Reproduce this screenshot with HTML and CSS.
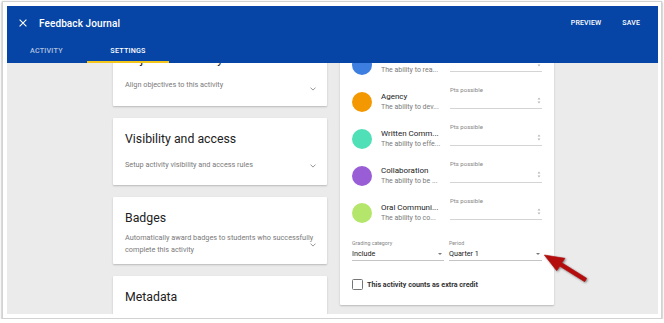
FILE: index.html
```html
<!DOCTYPE html>
<html lang="en">
<head>
<meta charset="utf-8">
<title>Feedback Journal – Settings</title>
<link rel="stylesheet" href="styles.css">
</head>
<body>
<div class="frame">
  <div class="app">
    <header class="appbar">
      <div class="bar-top">
        <svg class="close" viewBox="0 0 8 8"><path d="M0.6 0.6L7.4 7.4M7.4 0.6L0.6 7.4"/></svg>
        <div class="title">Feedback Journal</div>
        <div class="actions"><span>PREVIEW</span><span>SAVE</span></div>
      </div>
      <nav class="tabs">
        <div class="tab first">ACTIVITY</div>
        <div class="tab active">SETTINGS</div>
      </nav>
    </header>
    <main class="content">
      <div class="scroll">
        <section class="col left">
          <div class="card setting setting-top">
            <h2>Objective Mastery</h2>
            <p>Align objectives to this activity</p>
            <svg class="chev" viewBox="0 0 6 4"><path d="M0.5 0.6L3 3.1L5.5 0.6"/></svg>
          </div>
          <div class="card setting">
            <h2>Visibility and access</h2>
            <p>Setup activity visibility and access rules</p>
            <svg class="chev" viewBox="0 0 6 4"><path d="M0.5 0.6L3 3.1L5.5 0.6"/></svg>
          </div>
          <div class="card setting">
            <h2>Badges</h2>
            <p>Automatically award badges to students who successfully complete this activity</p>
            <svg class="chev" viewBox="0 0 6 4"><path d="M0.5 0.6L3 3.1L5.5 0.6"/></svg>
          </div>
          <div class="card setting">
            <h2>Metadata</h2>
          </div>
        </section>
        <section class="col right">
          <div class="card outcomes">
            <div class="row">
              <span class="dot blue"></span>
              <div class="info"><div class="name">Knowledge &amp; Thi...</div><div class="desc">The ability to rea...</div></div>
              <div class="field"><label>Pts possible</label><div class="input"><svg class="spin" viewBox="0 0 4 7"><path d="M2 0.5L3.4 2.4H0.6Z M2 6.5L3.4 4.6H0.6Z"/></svg></div></div>
            </div>
            <div class="row">
              <span class="dot orange"></span>
              <div class="info"><div class="name">Agency</div><div class="desc">The ability to dev...</div></div>
              <div class="field"><label>Pts possible</label><div class="input"><svg class="spin" viewBox="0 0 4 7"><path d="M2 0.5L3.4 2.4H0.6Z M2 6.5L3.4 4.6H0.6Z"/></svg></div></div>
            </div>
            <div class="row">
              <span class="dot teal"></span>
              <div class="info"><div class="name">Written Comm...</div><div class="desc">The ability to effe...</div></div>
              <div class="field"><label>Pts possible</label><div class="input"><svg class="spin" viewBox="0 0 4 7"><path d="M2 0.5L3.4 2.4H0.6Z M2 6.5L3.4 4.6H0.6Z"/></svg></div></div>
            </div>
            <div class="row">
              <span class="dot purple"></span>
              <div class="info"><div class="name">Collaboration</div><div class="desc">The ability to be ...</div></div>
              <div class="field"><label>Pts possible</label><div class="input"><svg class="spin" viewBox="0 0 4 7"><path d="M2 0.5L3.4 2.4H0.6Z M2 6.5L3.4 4.6H0.6Z"/></svg></div></div>
            </div>
            <div class="row">
              <span class="dot green"></span>
              <div class="info"><div class="name">Oral Communi...</div><div class="desc">The ability to co...</div></div>
              <div class="field"><label>Pts possible</label><div class="input"><svg class="spin" viewBox="0 0 4 7"><path d="M2 0.5L3.4 2.4H0.6Z M2 6.5L3.4 4.6H0.6Z"/></svg></div></div>
            </div>
            <div class="selects">
              <div class="select">
                <label>Grading category</label>
                <div class="value"><span>Include</span><span class="caret"></span></div>
              </div>
              <div class="select">
                <label>Period</label>
                <div class="value"><span>Quarter 1</span><span class="caret"></span></div>
              </div>
            </div>
            <div class="check">
              <span class="box"></span>
              <span class="check-label">This activity counts as extra credit</span>
            </div>
          </div>
        </section>
      </div>
    </main>
    <svg class="annot-arrow" viewBox="0 0 52 35" width="52" height="35">
      <polygon points="4.3,5 25,8.3 21.9,12.8 46.7,28.3 44.7,31.7 19.8,16.2 16.7,20.7"/>
    </svg>
  </div>
</div>
</body>
</html>
```

FILE: styles.css
```css
* { box-sizing: border-box; }

html, body {
  margin: 0;
  padding: 0;
  background: #ffffff;
}

body {
  font-family: Roboto, "Noto Sans", "Liberation Sans", sans-serif;
}

.frame {
  margin: 1px 0 0 2px;
  width: 660px;
  height: 318px;
  border: 1px solid #d2d2d2;
  padding: 4px 3px 4px 4px;
  background: #ffffff;
  box-shadow: 0 1px 2px rgba(0, 0, 0, 0.45);
}

.app {
  position: relative;
  width: 651px;
  height: 308px;
  display: flex;
  flex-direction: column;
  background: #ebebeb;
  overflow: hidden;
}

/* ---------- App bar ---------- */
.appbar {
  flex: none;
  height: 57px;
  background: #0645a5;
  color: #ffffff;
  position: relative;
  z-index: 2;
}

.bar-top {
  height: 34px;
  display: flex;
  align-items: center;
  padding: 0 18px 0 12px;
}

.close {
  width: 8px;
  height: 8px;
  margin-right: 12px;
  stroke: #ffffff;
  stroke-width: 1.1;
  fill: none;
}

.title {
  flex: 1;
  font-size: 10px;
  font-weight: 500;
  letter-spacing: 0.1px;
}

.actions {
  display: flex;
  gap: 21px;
  font-size: 7px;
  font-weight: 500;
  letter-spacing: 0.15px;
}

.tabs {
  display: flex;
  height: 23px;
}

.tab {
  height: 23px;
  line-height: 21px;
  font-size: 7.2px;
  font-weight: 500;
  letter-spacing: 0.2px;
  color: rgba(255, 255, 255, 0.68);
}

.tab.first {
  width: 80px;
  padding-left: 23px;
}

.tab.active {
  width: 82px;
  text-align: center;
  color: #ffffff;
  border-bottom: 2px solid #f4c51a;
}

/* ---------- Content ---------- */
.content {
  flex: 1;
  overflow: hidden;
}

.scroll {
  display: flex;
  align-items: flex-start;
  gap: 13px;
  padding-left: 106px;
  margin-top: -24px;
}

.col {
  width: 214px;
  flex: none;
}

.left {
  display: flex;
  flex-direction: column;
  gap: 12px;
}

.card {
  background: #ffffff;
  border-radius: 1px;
  box-shadow: 0 1px 2px rgba(0, 0, 0, 0.22);
}

.setting {
  position: relative;
  height: 67px;
  padding: 13px 12px 0;
}

.setting h2 {
  margin: 0;
  font-size: 12.3px;
  line-height: 16px;
  font-weight: 400;
  color: #212121;
}

.setting-top {
  padding-top: 12px;
}

.setting-top p {
  margin-top: 9px;
}

.setting-top .chev {
  top: 48px;
}

.setting p {
  margin: 6px 0 0;
  width: 200px;
  height: 24px;
  display: flex;
  align-items: center;
  font-size: 7.3px;
  line-height: 12px;
  color: #7a7a7a;
}

.chev {
  position: absolute;
  right: 11px;
  top: 46px;
  width: 6px;
  height: 4px;
  fill: none;
  stroke: #8a8a8a;
  stroke-width: 0.9;
}

/* ---------- Outcomes card ---------- */
.outcomes {
  padding: 7.5px 12px 15.5px;
}

.row {
  display: grid;
  grid-template-columns: 20px 60px 92px;
  column-gap: 9px;
  height: 37px;
}

.dot {
  align-self: center;
  width: 20px;
  height: 20px;
  border-radius: 50%;
}

.dot.blue { background: #3d7fe1; }
.dot.orange { background: #f39800; }
.dot.teal { background: #4fe0b7; }
.dot.purple { background: #995dd5; }
.dot.green { background: #b4e66c; }

.info {
  align-self: center;
  white-space: nowrap;
  overflow: hidden;
}

.name {
  font-size: 8px;
  line-height: 10px;
  color: #212121;
}

.desc {
  font-size: 7px;
  line-height: 10px;
  color: #7a7a7a;
}

.field {
  padding-top: 1px;
}

.field label {
  display: block;
  font-size: 6px;
  line-height: 9px;
  color: #858585;
}

.input {
  position: relative;
  height: 15px;
  border-bottom: 1px solid #d4d4d4;
  display: flex;
  align-items: center;
  justify-content: flex-end;
  padding-right: 1px;
}

.spin {
  width: 4px;
  height: 7px;
  fill: #b5b5b5;
}

.selects {
  margin-top: 7px;
  display: grid;
  grid-template-columns: 92px 93px;
  column-gap: 5px;
}

.select label {
  display: block;
  font-size: 5.3px;
  line-height: 9px;
  color: #858585;
}

.value {
  display: flex;
  align-items: center;
  justify-content: space-between;
  height: 13px;
  font-size: 7.2px;
  line-height: 12px;
  color: #212121;
  border-bottom: 1px solid #c4c4c4;
  padding-right: 2px;
}

.caret {
  width: 0;
  height: 0;
  border-left: 2.5px solid transparent;
  border-right: 2.5px solid transparent;
  border-top: 2.5px solid #7a7a7a;
}

.check {
  margin-top: 18px;
  display: flex;
  align-items: center;
  gap: 4px;
  height: 11px;
}

.box {
  width: 11px;
  height: 11px;
  border: 1.3px solid #757575;
  border-radius: 1.5px;
  flex: none;
}

.check-label {
  font-size: 7.2px;
  font-weight: 700;
  color: #333333;
}

/* ---------- Annotation ---------- */
.annot-arrow {
  position: absolute;
  left: 533px;
  top: 244px;
  z-index: 3;
  overflow: visible;
  filter: drop-shadow(1px 1.5px 1px rgba(0, 0, 0, 0.45));
}

.annot-arrow polygon {
  fill: #b30d0d;
  stroke: #b30d0d;
  stroke-width: 0.6;
  stroke-linejoin: round;
}
```
